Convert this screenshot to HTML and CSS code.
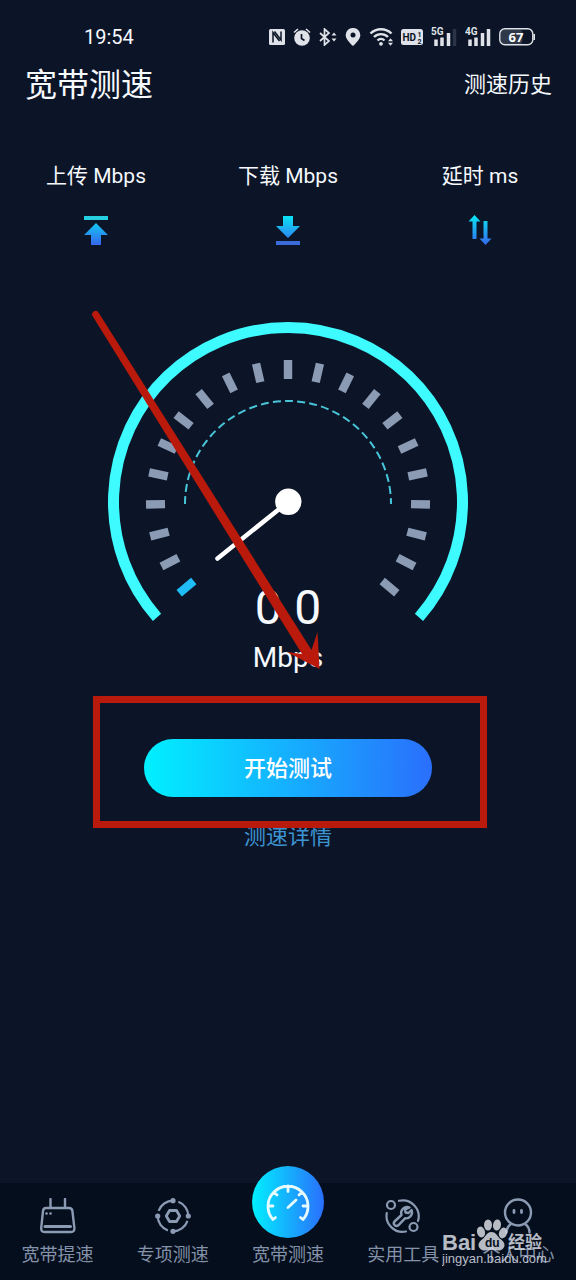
FILE: index.html
```html
<!DOCTYPE html>
<html lang="zh-CN">
<head>
<meta charset="utf-8">
<meta name="viewport" content="width=device-width, initial-scale=1">
<title>宽带测速</title>
<link rel="stylesheet" href="styles.css">
</head>
<body>
<div class="app">
  <div class="status">
    <time class="clock">19:54</time>
    <div class="status-icons">
      <svg width="16" height="18" viewBox="0 0 16 18"><rect y="1" width="16" height="16" rx="1.500" fill="#dfe2e8"/><path d="M4 14.500V4.500L10.500 13M5.500 3.500 12 12V3.500" fill="none" stroke="#0c1527" stroke-width="1.500"/></svg>
      <svg width="18" height="18" viewBox="0 0 18 18"><circle cx="9" cy="10" r="7.800" fill="#dfe2e8"/><path d="M1 4.500 5 1M17 4.500 13 1" stroke="#dfe2e8" stroke-width="1.600"/><path d="M8.500 6v4.500l3 2" fill="none" stroke="#0c1527" stroke-width="1.700"/></svg>
      <svg width="18" height="18" viewBox="0 0 18 18"><path d="M1 5l9 8-4.500 4V1L10 5l-9 8" fill="none" stroke="#dfe2e8" stroke-width="1.700"/><path d="M12.500 7.500 15 4.500l2.500 3zM12.500 10.500l2.500 3 2.500-3z" fill="#dfe2e8"/></svg>
      <svg width="16" height="18" viewBox="0 0 16 18"><path d="M8 0a7 7 0 0 1 7.300 7.200C15.300 11 11 15 8 18 5 15 .7 11 .7 7.200A7 7 0 0 1 8 0z" fill="#dfe2e8"/><circle cx="8" cy="7" r="2.500" fill="#0c1527"/></svg>
      <svg width="24" height="18" viewBox="0 0 24 18"><g fill="none" stroke="#dfe2e8" stroke-width="2.400"><path d="M1.500 5.500a15 15 0 0 1 21 0M5 9a10 10 0 0 1 14 0M8.500 12.500a5 5 0 0 1 7 0"/></g><circle cx="12" cy="15.800" r="1.900" fill="#dfe2e8"/><path d="M19 13.300l2.500-3 2.500 3zM19 14.800l2.500 3 2.500-3z" fill="#dfe2e8"/></svg>
      <svg width="22" height="18" viewBox="0 0 22 18"><rect y="1" width="22" height="16" rx="2.500" fill="#dfe2e8"/><text x="1.500" y="13" class="glyph-hd">HD</text><text x="16.500" y="9" class="glyph-mini">1</text><text x="16.500" y="15.500" class="glyph-mini">2</text></svg>
      <svg width="26" height="22" viewBox="0 -2 26 22"><text x="0" y="7" class="glyph-net">5G</text><path d="M5 11.500V18M11 9.500V18M17.500 5v13" stroke="#dfe2e8" stroke-width="3.500"/><path d="M23.500 1v17" stroke="#2b3446" stroke-width="3.500"/></svg>
      <svg width="26" height="22" viewBox="0 -2 26 22"><text x="0" y="7" class="glyph-net">4G</text><path d="M5 11.500V18M11 9.500V18M17.500 5v13M23.500 1v17" stroke="#dfe2e8" stroke-width="3.500"/></svg>
      <svg width="36" height="18" viewBox="0 0 36 18"><rect x="1.500" y="1.500" width="22" height="15" rx="4" fill="#2f3848"/><rect x=".8" y=".8" width="33" height="16" rx="5" fill="none" stroke="#dfe2e8" stroke-width="1.400"/><path d="M35.200 6v6" stroke="#dfe2e8" stroke-width="1.600"/><text x="17" y="13.500" text-anchor="middle" class="glyph-batt">67</text></svg>
    </div>
  </div>

  <header class="titlebar">
    <h1 class="title">宽带测速</h1>
    <a class="history" href="#history">测速历史</a>
  </header>

  <svg class="defs" aria-hidden="true">
    <defs>
      <linearGradient id="down" x1="0" y1="0" x2="0" y2="30" gradientUnits="userSpaceOnUse"><stop offset="0" stop-color="#09e8f5"/><stop offset="1" stop-color="#3568ee"/></linearGradient>
      <linearGradient id="across" x1="0" x2="1"><stop offset="0" stop-color="#00f0ff"/><stop offset="1" stop-color="#2a6ffc"/></linearGradient>
      <rect id="tick" x="175.800" y="38" width="8.400" height="19"/>
    </defs>
  </svg>

  <section class="metrics">
    <div class="metric"><span>上传 Mbps</span>
      <svg width="24" height="30" viewBox="0 0 24 30"><path d="M0 1h24v4H0z" fill="#25cfdf"/><path d="M12 8 24 20h-7v10H7V20H0z" fill="url(#down)"/></svg>
    </div>
    <div class="metric"><span>下载 Mbps</span>
      <svg width="24" height="30" viewBox="0 0 24 30"><path d="M7 1h10v10h7L12 23 0 11h7z" fill="url(#down)"/><path d="M0 26h24v4H0z" fill="#3b6bd8"/></svg>
    </div>
    <div class="metric"><span>延时 ms</span>
      <svg width="24" height="30" viewBox="0 0 24 30"><path d="M6.500 0 12.500 6.500H8.500V24H4.500V6.500H.5zM15.500 6h4v17.500h4L17.500 30l-6-6.500h4z" fill="url(#down)"/></svg>
    </div>
  </section>

  <main class="stage">
    <div class="gauge">
      <svg class="dial" viewBox="0 0 360 358">
        <path d="M49 295.300A174.500 174.500 0 1 1 311 295.300" fill="none" stroke="#3dfbfe" stroke-width="11"/>
        <path d="M77 182A103 103 0 0 1 283 182" fill="none" stroke="#48c5d8" stroke-width="2" stroke-dasharray="8 4.200"/>
        <use href="#tick" fill="#1fbcf5" transform="rotate(-130 180 180)"/>
        <g fill="#8b9bb4">
          <use href="#tick" transform="rotate(-117 180 180)"/>
          <use href="#tick" transform="rotate(-104 180 180)"/>
          <use href="#tick" transform="rotate(-91 180 180)"/>
          <use href="#tick" transform="rotate(-78 180 180)"/>
          <use href="#tick" transform="rotate(-65 180 180)"/>
          <use href="#tick" transform="rotate(-52 180 180)"/>
          <use href="#tick" transform="rotate(-39 180 180)"/>
          <use href="#tick" transform="rotate(-26 180 180)"/>
          <use href="#tick" transform="rotate(-13 180 180)"/>
          <use href="#tick"/>
          <use href="#tick" transform="rotate(13 180 180)"/>
          <use href="#tick" transform="rotate(26 180 180)"/>
          <use href="#tick" transform="rotate(39 180 180)"/>
          <use href="#tick" transform="rotate(52 180 180)"/>
          <use href="#tick" transform="rotate(65 180 180)"/>
          <use href="#tick" transform="rotate(78 180 180)"/>
          <use href="#tick" transform="rotate(91 180 180)"/>
          <use href="#tick" transform="rotate(104 180 180)"/>
          <use href="#tick" transform="rotate(117 180 180)"/>
          <use href="#tick" transform="rotate(130 180 180)"/>
        </g>
        <path d="M180 180 109.500 236.500" stroke="#fff" stroke-width="4.500" stroke-linecap="round"/>
        <circle cx="180.300" cy="179.800" r="13.200" fill="#fff"/>
      </svg>
      <div class="readout"><span class="value">0.0</span><span class="unit">Mbps</span></div>
    </div>
    <button class="start" type="button">开始测试</button>
    <a class="details" href="#details">测速详情</a>
    <svg class="callout" viewBox="0 302 576 540" aria-hidden="true">
      <rect x="96.500" y="699.500" width="387" height="125" fill="none" stroke="#b91a0b" stroke-width="7"/>
      <path d="M92.700 316.200A3.400 3.400 0 0 1 98.500 312.500L311.500 650 317.500 632 319.500 669 287 652 302 654z" fill="#b91a0b"/>
    </svg>
  </main>

  <nav class="tabs">
    <a class="tab" href="#boost">
      <svg width="36" height="36" viewBox="0 0 36 36" fill="none" stroke="#8b9bb4" stroke-width="2.400" stroke-linecap="round"><path d="M10.500 1v8M25 1v8"/><path d="M6 10h23q3 0 3.400 3l2 17q.3 4-3.400 4H4.500Q1 34 1.200 30l1.800-17q.4-3 3-3z"/><path d="M5 28.500h25.500" stroke-width="3"/><path d="M6.500 15.500h.1M10.500 15.500h.1" stroke-width="2.600"/></svg>
      <span>宽带提速</span>
    </a>
    <a class="tab" href="#special">
      <svg width="36" height="36" viewBox="0 0 36 36" fill="none" stroke="#8b9bb4" stroke-width="2.200"><circle cx="18" cy="18" r="15.300" stroke-dasharray="19 5.030" stroke-dashoffset="-5"/><path d="M14.500 12.500h7l3.200 5.500-3.200 5.500h-7L11.300 18z" stroke-width="2.800" stroke-linejoin="round"/><g fill="#8b9bb4" stroke="none"><circle cx="18" cy="2.700" r="2.600"/><circle cx="33.300" cy="18" r="2.600"/><circle cx="18" cy="33.300" r="2.600"/><circle cx="2.700" cy="18" r="2.600"/></g></svg>
      <span>专项测速</span>
    </a>
    <a class="tab tab-main" href="#speed" aria-current="page">
      <svg width="72" height="72" viewBox="0 0 72 72" fill="none" stroke="#e6fbff" stroke-width="2.800" stroke-linecap="round"><circle cx="36" cy="36" r="36" fill="url(#across)" stroke="none"/><path d="M21 53.500A20 20 0 1 1 51 53.500M21 53.500l2.500-2M51 53.500l-2.500-2M17 40h4M55 40h-4M36 20v5.500M22 26l3 3M50 26l-3 3M36 41.500l8-7.500"/></svg>
      <span>宽带测速</span>
    </a>
    <a class="tab" href="#tools">
      <svg width="36" height="36" viewBox="0 0 36 36" fill="none" stroke="#8b9bb4" stroke-width="2.200" stroke-linecap="round" stroke-linejoin="round"><circle cx="6" cy="7" r="4"/><circle cx="28.500" cy="29" r="4"/><path d="M14 2.800A16 16 0 0 1 33 23M1.800 15A16 16 0 0 0 21 33.500"/><path d="M24.500 9.500a6 6 0 0 0-8 7.500L9.500 23.500a2.700 2.700 0 0 0 3.800 3.800L20 20.300a6 6 0 0 0 6.500-8.300l-3 3-3-.5-.3-3z" stroke-width="2.400"/></svg>
      <span>实用工具</span>
    </a>
    <a class="tab" href="#me">
      <svg width="36" height="36" viewBox="0 0 36 36" fill="none" stroke="#8b9bb4" stroke-width="2.400" stroke-linecap="round"><circle cx="18" cy="14.500" r="13"/><path d="M14 12.500v2M21.500 12.500v2" stroke-width="2.800"/><path d="M11 26q-4.500 3-4.500 8.500M25 26q4.500 3 4.500 8.500"/></svg>
      <span>个人中心</span>
    </a>
    <svg class="watermark" width="112" height="64" viewBox="0 0 112 64" fill="#d5dae2" role="img" aria-label="Baidu 经验">
      <text x="0" y="34" class="wm-brand">Bai</text>
      <g transform="translate(0 -3)"><ellipse cx="39" cy="19" rx="4" ry="5.500" transform="rotate(-15 39 19)"/><ellipse cx="46" cy="12" rx="4" ry="5.500"/><ellipse cx="55" cy="12" rx="4" ry="5.500" transform="rotate(8 55 12)"/><ellipse cx="61" cy="20" rx="4" ry="5.500" transform="rotate(18 61 20)"/><path d="M49.500 19c5 0 6 5 9 7 4 3 5 6 3 9-3 4-7 2-12 2s-9 2-12-2c-2-3-1-6 3-9 3-2 4-7 9-7z"/></g>
      <text x="43" y="31" class="wm-du">du</text>
      <text x="66" y="32" class="wm-cn">经验</text>
      <text x="0" y="47" class="wm-url">jingyan.baidu.com</text>
    </svg>
  </nav>
</div>
</body>
</html>
```
FILE: styles.css
```css
* { box-sizing: border-box; }

body {
  margin: 0;
  background: #0c1527;
  color: #f6f9fd;
  font-family: Roboto, "Noto Sans CJK SC", sans-serif;
}

a { color: inherit; text-decoration: none; }
svg { display: block; flex: none; }
.defs { position: absolute; width: 0; height: 0; }

.app {
  display: flex;
  flex-direction: column;
  min-height: 100vh;
}

.status {
  display: flex;
  align-items: center;
  justify-content: space-between;
  height: 56px;
  padding: 18px 41px 0 84px;
}
.clock { font-size: 20px; line-height: 24px; }
.status-icons { display: flex; align-items: center; gap: 8px; }
.glyph-hd { font: 700 10px Roboto, sans-serif; fill: #0c1527; }
.glyph-mini { font: 700 7px Roboto, sans-serif; fill: #0c1527; }
.glyph-net { font: 700 10px Roboto, sans-serif; fill: #dfe2e8; }
.glyph-batt { font: 700 13px "Open Sans", sans-serif; fill: #fff; }

.titlebar {
  display: flex;
  align-items: center;
  justify-content: space-between;
  height: 58px;
  padding: 0 24px 0 25px;
}
.title { margin: 0; font-size: 32px; line-height: 40px; font-weight: 400; }
.history { font-size: 22px; line-height: 32px; }

.metrics {
  display: grid;
  grid-template-columns: repeat(3, 1fr);
  padding-top: 48px;
}
.metric {
  display: flex;
  flex-direction: column;
  align-items: center;
  gap: 25px;
  font-size: 21px;
  line-height: 28px;
}

.stage {
  position: relative;
  display: flex;
  flex-direction: column;
  align-items: center;
  margin-top: 57px;
  padding: 20px 0 48px;
}
.gauge { display: grid; justify-items: center; }
.dial { grid-area: 1 / 1; width: 360px; }
.readout {
  grid-area: 1 / 1;
  align-self: end;
  display: flex;
  flex-direction: column;
  align-items: center;
}
.value { font-size: 48px; line-height: 56px; }
.unit { font-size: 28px; line-height: 44px; }

.start {
  width: 50%;
  height: 58px;
  margin-top: 59px;
  padding: 2px 0 0;
  border: 0;
  border-radius: 29px;
  background: linear-gradient(90deg, #00f0ff, #2a6ffc);
  color: #fff;
  font: 500 22px/32px Roboto, "Noto Sans CJK SC", sans-serif;
}
.details {
  margin-top: 24px;
  color: #3d94d2;
  font-size: 22px;
  line-height: 32px;
}
.callout {
  position: absolute;
  top: 0;
  left: 50%;
  width: 576px;
  transform: translateX(-50%);
  pointer-events: none;
}

.tabs {
  position: relative;
  display: grid;
  grid-template-columns: repeat(5, 1fr);
  align-content: end;
  align-items: end;
  height: 97px;
  margin-top: auto;
  padding-bottom: 12px;
  background: #050e1c;
}
.tab {
  display: flex;
  flex-direction: column;
  align-items: center;
  gap: 8px;
  color: #8492aa;
  font-size: 18px;
  line-height: 26px;
}
.tab-main { gap: 4px; }

.watermark {
  position: absolute;
  right: 22px;
  bottom: 0;
  opacity: 0.85;
  pointer-events: none;
}
.wm-brand { font: 700 22px "Liberation Sans", sans-serif; }
.wm-du { font: 700 12px "Liberation Sans", sans-serif; fill: #050e1c; }
.wm-cn { font: 700 17px "Noto Sans CJK SC", sans-serif; }
.wm-url { font: 400 13px "Liberation Sans", sans-serif; }
```
